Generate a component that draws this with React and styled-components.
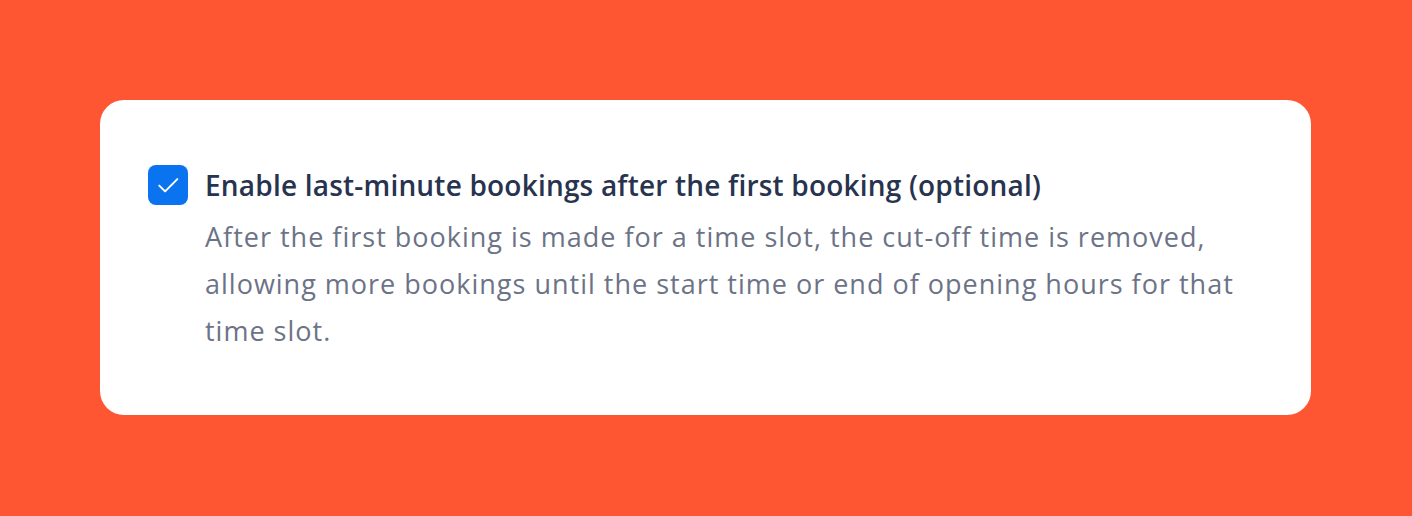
import styled, { createGlobalStyle } from "styled-components";

const GlobalStyle = createGlobalStyle`
  html, body {
    margin: 0;
    padding: 0;
    background: #fe5533;
  }
  body {
    font-family: "Open Sans", "Noto Sans", sans-serif;
  }
`;

const Page = styled.div`
  width: 1412px;
  height: 516px;
  box-sizing: border-box;
  padding: 100px 101px 101px 100px;
  background: #fe5533;
`;

const Card = styled.div`
  background: #fff;
  border-radius: 24px;
  height: 100%;
  box-sizing: border-box;
  padding: 65px 48px 0 48px;
  display: flex;
  gap: 17px;
  align-items: flex-start;
`;

const Box = styled.div`
  flex: 0 0 40px;
  width: 40px;
  height: 40px;
  border-radius: 8px;
  background: #0a74f0;
  display: flex;
  align-items: center;
  justify-content: center;
  svg {
    width: 28px;
    height: 28px;
  }
`;

const Text = styled.div`
  display: flex;
  flex-direction: column;
  max-width: 1058px;
`;

const Title = styled.div`
  font-size: 28px;
  line-height: 40px;
  font-weight: 600;
  letter-spacing: 0.2px;
  color: #28334f;
`;

const Description = styled.p`
  margin: 8px 0 0;
  font-size: 27px;
  line-height: 47px;
  font-weight: 500;
  letter-spacing: 1px;
  color: #6c7387;
`;

export default function App() {
  return (
    <>
      <GlobalStyle />
      <Page>
        <Card>
          <Box>
            <svg viewBox="0 0 24 24" fill="none" stroke="#fff" strokeWidth="1.7" strokeLinecap="round" strokeLinejoin="round">
              <path d="M4.5 12.5l5 5L20 7" />
            </svg>
          </Box>
          <Text>
            <Title>Enable last-minute bookings after the first booking (optional)</Title>
            <Description>
              After the first booking is made for a time slot, the cut-off time is removed,
              allowing more bookings until the start time or end of opening hours for that
              time slot.
            </Description>
          </Text>
        </Card>
      </Page>
    </>
  );
}
